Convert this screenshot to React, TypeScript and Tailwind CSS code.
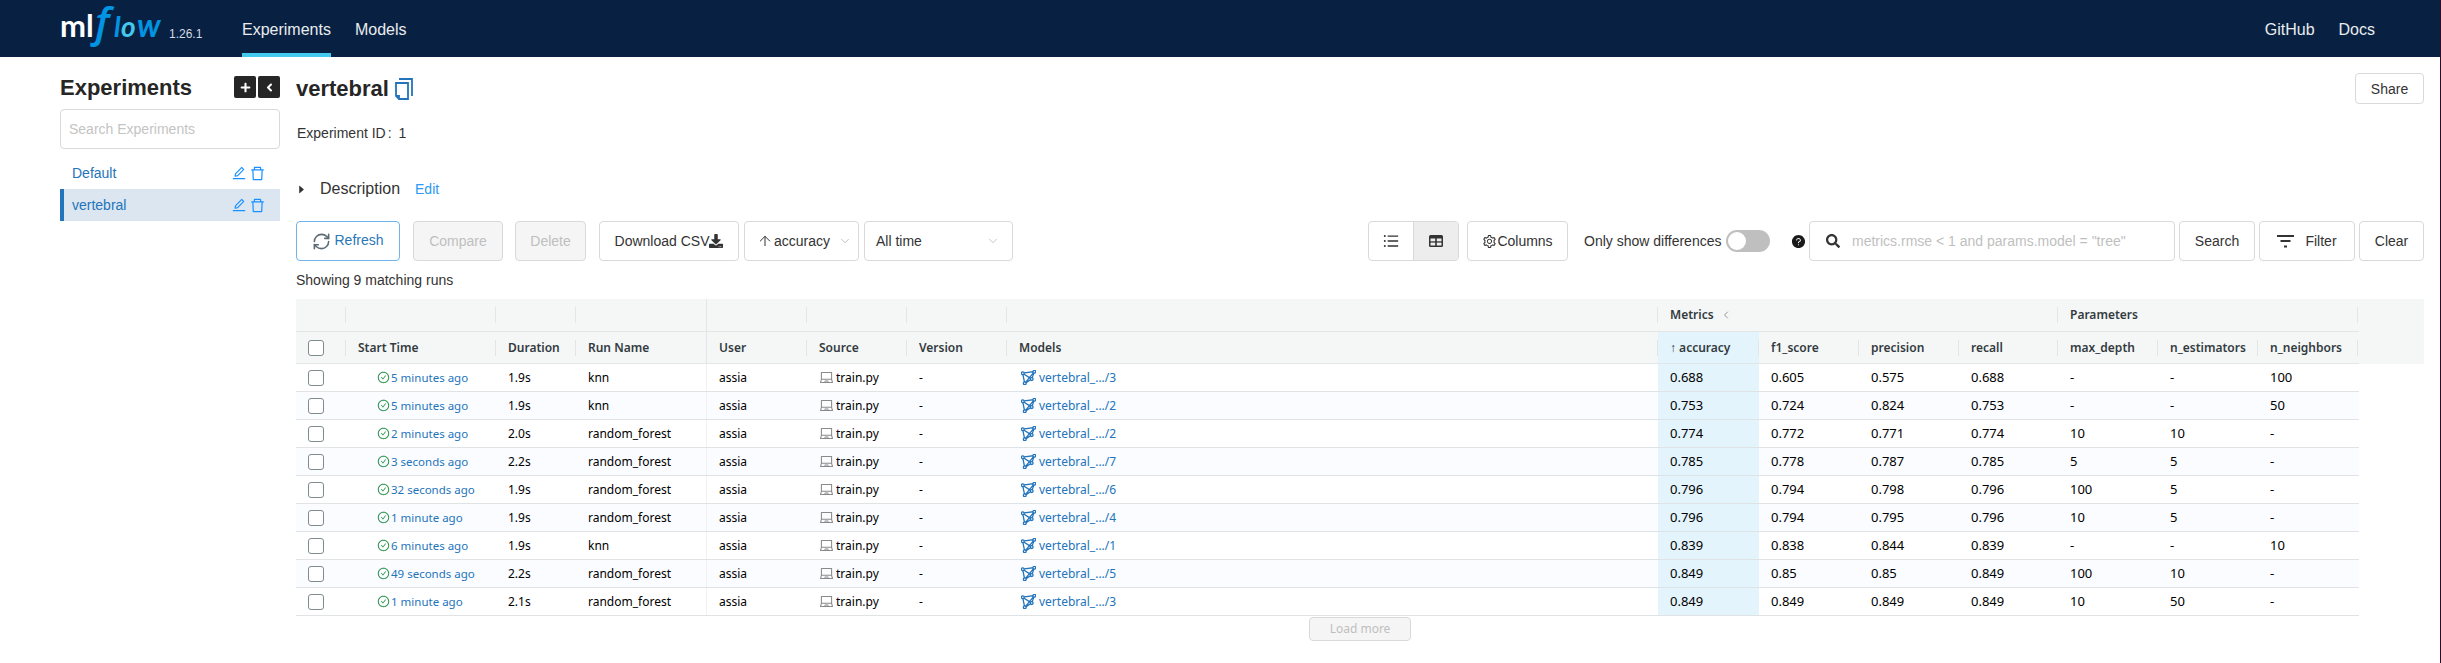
import { AiFillCaretRight, AiFillQuestionCircle, AiOutlineBars, AiOutlineCheckCircle, AiOutlineDelete, AiOutlineEdit, AiOutlineLaptop, AiOutlineSetting } from "react-icons/ai"
import { FaAngleLeft, FaDownload, FaPlus, FaSearch } from "react-icons/fa"
import { ArrowUp, ChevronDown, ChevronLeft, RefreshCw } from "lucide-react"
import type { ReactNode } from "react"

const runs = [
    ["5 minutes ago", "1.9s", "knn", "vertebral_.../3", "0.688", "0.605", "0.575", "0.688", "-", "-", "100"],
    ["5 minutes ago", "1.9s", "knn", "vertebral_.../2", "0.753", "0.724", "0.824", "0.753", "-", "-", "50"],
    ["2 minutes ago", "2.0s", "random_forest", "vertebral_.../2", "0.774", "0.772", "0.771", "0.774", "10", "10", "-"],
    ["3 seconds ago", "2.2s", "random_forest", "vertebral_.../7", "0.785", "0.778", "0.787", "0.785", "5", "5", "-"],
    ["32 seconds ago", "1.9s", "random_forest", "vertebral_.../6", "0.796", "0.794", "0.798", "0.796", "100", "5", "-"],
    ["1 minute ago", "1.9s", "random_forest", "vertebral_.../4", "0.796", "0.794", "0.795", "0.796", "10", "5", "-"],
    ["6 minutes ago", "1.9s", "knn", "vertebral_.../1", "0.839", "0.838", "0.844", "0.839", "-", "-", "10"],
    ["49 seconds ago", "2.2s", "random_forest", "vertebral_.../5", "0.849", "0.85", "0.85", "0.849", "100", "10", "-"],
    ["1 minute ago", "2.1s", "random_forest", "vertebral_.../3", "0.849", "0.849", "0.849", "0.849", "10", "50", "-"],
]

function Logo() {
    return (
        <svg width="108" height="57" viewBox="0 0 108 57" className="shrink-0">
            <text x="1" y="37" fontFamily="Lato, sans-serif" fontWeight="700" fontSize="31" fill="#ffffff">ml</text>
            <text x="36" y="37" fontFamily="'Open Sans', sans-serif" fontStyle="italic" fontWeight="600" fontSize="42" fill="#0194e2">f</text>
            <text x="55" y="37" fontFamily="Lato, sans-serif" fontStyle="italic" fontWeight="700" fontSize="28" fill="#0194e2">l</text>
            <text x="62" y="37" fontFamily="Lato, sans-serif" fontStyle="italic" fontWeight="700" fontSize="28" fill="#43c9ed">o</text>
            <text x="78" y="37" fontFamily="Lato, sans-serif" fontStyle="italic" fontWeight="700" fontSize="32" fill="#0194e2">w</text>
        </svg>
    )
}

function CopyIcon() {
    return (
        <svg width="18" height="22" viewBox="0 0 18 22" fill="none" stroke="#2374bb" strokeWidth="1.8" className="ml-[6px] shrink-0">
            <path d="M4 1h13v17" />
            <path d="M1 5h12v16H4l-3-3z" />
            <path d="M1 18h3v3" />
        </svg>
    )
}

function ModelIcon() {
    return (
        <svg width="15" height="15" viewBox="0 0 14 14" fill="none" stroke="#2374bb" strokeWidth="1.2" className="shrink-0">
            <path d="M1.5 3 12.5 1.5 10 8.5 3.5 12.5ZM1.5 3 10 8.5M12.5 1.5 3.5 12.5" />
            <circle cx="1.7" cy="3" r="1.3" fill="#ffffff" />
            <circle cx="12.4" cy="1.7" r="1.3" fill="#ffffff" />
            <circle cx="10" cy="8.5" r="1.3" fill="#ffffff" />
            <circle cx="3.5" cy="12.4" r="1.3" fill="#ffffff" />
        </svg>
    )
}

function GridIcon() {
    return (
        <svg width="14" height="12" viewBox="0 0 14 12" className="shrink-0">
            <rect width="14" height="12" rx="1.5" fill="#333333" />
            <rect x="1.5" y="3.5" width="4.7" height="2.8" fill="#ededed" />
            <rect x="7.8" y="3.5" width="4.7" height="2.8" fill="#ededed" />
            <rect x="1.5" y="7.6" width="4.7" height="2.9" fill="#ededed" />
            <rect x="7.8" y="7.6" width="4.7" height="2.9" fill="#ededed" />
        </svg>
    )
}

function FilterIcon() {
    return (
        <svg width="17" height="13" viewBox="0 0 17 13" fill="#333333" className="shrink-0">
            <rect width="17" height="2" />
            <rect x="3.5" y="5" width="10" height="2" />
            <rect x="7" y="10.5" width="3" height="2" />
        </svg>
    )
}

function Btn({ className, children }: { className: string, children: ReactNode }) {
    return (
        <div className={`h-10 shrink-0 flex items-center justify-center rounded-[4px] border text-sm ${className}`}>
            {children}
        </div>
    )
}

function Sep() {
    return <div className="h-4 w-px bg-[#e3e6e6] shrink-0"></div>
}

function HeaderCell({ w, label, sorted }: { w: string, label?: ReactNode, sorted?: boolean }) {
    return (
        <div className={`h-full shrink-0 flex items-center justify-between pl-3 ${w} ${sorted ? "bg-[#e4f4fc]" : ""}`}>
            <span className="whitespace-nowrap">{label}</span>
            <Sep />
        </div>
    )
}

function Cell({ w, children, sorted }: { w: string, children: ReactNode, sorted?: boolean }) {
    return (
        <div className={`h-full shrink-0 flex items-center pl-3 whitespace-nowrap ${w} ${sorted ? "bg-[#e4f4fc]" : ""}`}>
            {children}
        </div>
    )
}

function Metric({ w, children, sorted }: { w: string, children: ReactNode, sorted?: boolean }) {
    return <Cell w={`${w} text-[13px]`} sorted={sorted}>{children}</Cell>
}

function Checkbox() {
    return <div className="w-4 h-4 rounded-[3px] border border-[#7f8c8d] bg-white"></div>
}

function ExperimentRow({ name, active }: { name: string, active?: boolean }) {
    return (
        <div className={`h-8 flex items-center text-sm text-[#2374bb] ${active ? "bg-[#dce6f1] border-l-4 border-[#2374bb] pl-2" : "pl-3"}`}>
            <span className="flex-1">{name}</span>
            <AiOutlineEdit size={16} className="text-[#1890ff]" />
            <AiOutlineDelete size={17} className="ml-[2px] mr-[14px] text-[#1890ff]" />
        </div>
    )
}

export default function App() {
    return (
        <div className="min-h-screen bg-white border-r border-[#300a24] font-['Liberation_Sans',Arial,sans-serif] text-[#333333]">
            {/* header */}
            <div className="h-[57px] bg-[#082142] flex items-center pl-[59px] pr-[65px] text-base text-[#e9ecef]">
                <Logo />
                <span className="ml-[2px] mt-[11px] w-[73px] text-xs text-[#d5dbe2]">1.26.1</span>
                <div className="h-full flex items-center border-b-4 border-[#43c9ed] pt-[6px]">Experiments</div>
                <div className="ml-6 pt-[2px]">Models</div>
                <div className="ml-auto pt-[2px]">GitHub</div>
                <div className="ml-6 pt-[2px]">Docs</div>
            </div>

            <div className="flex pl-[60px] pr-[16px]">
                {/* experiment list */}
                <div className="w-[220px] shrink-0 pt-[19px]">
                    <div className="h-[22px] flex items-center justify-between">
                        <div className="text-[22px] font-bold text-[#262626]">Experiments</div>
                        <div className="flex gap-0.5">
                            <div className="w-[22px] h-[22px] rounded-[2px] bg-[#262626] text-white flex items-center justify-center"><FaPlus size={11} /></div>
                            <div className="w-[22px] h-[22px] rounded-[2px] bg-[#262626] text-white flex items-center justify-center"><FaAngleLeft size={13} /></div>
                        </div>
                    </div>
                    <input placeholder="Search Experiments" className="mt-[11px] w-full h-10 px-2 rounded-[4px] border border-[#d9d9d9] text-sm placeholder:text-[#c4c4c4]" />
                    <div className="mt-2">
                        <ExperimentRow name="Default" />
                        <ExperimentRow name="vertebral" active />
                    </div>
                </div>

                {/* experiment page */}
                <div className="flex-1 min-w-0 ml-4 pt-4">
                    <div className="h-[31px] flex items-center">
                        <div className="text-[22px] font-bold text-[#262626]">vertebral</div>
                        <CopyIcon />
                        <Btn className="ml-auto !h-[31px] w-[69px] border-[#d9d9d9]">Share</Btn>
                    </div>
                    <div className="mt-[18px] h-[22px] pl-px flex items-center text-sm">Experiment ID<span className="ml-[2px] mr-[7px]">:</span> 1</div>
                    <div className="mt-[33px] h-6 flex items-center">
                        <AiFillCaretRight size={11} className="text-[#333333]" />
                        <span className="ml-[13px] text-base">Description</span>
                        <span className="ml-[15px] text-sm text-[#2e9af5]">Edit</span>
                    </div>

                    {/* toolbar */}
                    <div className="mt-[20px] flex items-center">
                        <Btn className="w-[104px] border-[#6eb3ec] text-[#2b78b8]">
                            <RefreshCw size={19} className="text-[#5c6b75] mr-[3px]" />
                            <span className="-mt-[2px]">Refresh</span>
                        </Btn>
                        <Btn className="ml-[13px] w-[90px] border-[#d9d9d9] bg-[#f5f5f5] text-[#bfbfbf]">Compare</Btn>
                        <Btn className="ml-3 w-[71px] border-[#d9d9d9] bg-[#f5f5f5] text-[#bfbfbf]">Delete</Btn>
                        <Btn className="ml-[13px] w-[140px] border-[#d9d9d9]">
                            Download CSV
                            <FaDownload size={14} />
                        </Btn>
                        <Btn className="ml-[5px] w-[115px] border-[#d9d9d9] !justify-start pl-3">
                            <ArrowUp size={16} strokeWidth={1.5} />
                            <span className="ml-[1px]">accuracy</span>
                            <ChevronDown size={14} strokeWidth={1} className="ml-[8px] text-[#999999]" />
                        </Btn>
                        <Btn className="ml-[5px] w-[149px] border-[#d9d9d9] !justify-between pl-[11px] pr-3">
                            All time
                            <ChevronDown size={14} strokeWidth={1} className="text-[#999999]" />
                        </Btn>

                        <div className="ml-auto h-10 w-[91px] flex rounded-[4px] border border-[#d9d9d9] overflow-hidden">
                            <div className="flex-1 flex items-center justify-center"><AiOutlineBars size={18} /></div>
                            <div className="flex-1 flex items-center justify-center bg-[#ededed] border-l border-[#d9d9d9]"><GridIcon /></div>
                        </div>
                        <Btn className="ml-2 w-[101px] border-[#d9d9d9]">
                            <AiOutlineSetting size={15} />
                            Columns
                        </Btn>
                        <span className="ml-4 w-[137px] shrink-0 text-sm whitespace-nowrap">Only show differences</span>
                        <div className="ml-[5px] w-11 h-[22px] rounded-full bg-[#bfbfbf] shrink-0 flex items-center pl-[2px]">
                            <div className="w-[18px] h-[18px] rounded-full bg-white"></div>
                        </div>
                        <AiFillQuestionCircle size={15} className="ml-[21px] shrink-0 text-[#1a1a1a]" />
                        <div className="ml-[3px] w-[366px] h-10 shrink-0 flex items-center pl-4 rounded-[4px] border border-[#d9d9d9]">
                            <FaSearch size={14} />
                            <input placeholder={'metrics.rmse < 1 and params.model = "tree"'} className="ml-[12px] flex-1 text-sm placeholder:text-[#bfbfbf]" />
                        </div>
                        <Btn className="ml-1 w-[76px] border-[#d9d9d9]">Search</Btn>
                        <Btn className="ml-1 w-[96px] border-[#d9d9d9] gap-[11px]"><FilterIcon />Filter</Btn>
                        <Btn className="ml-1 w-[65px] border-[#d9d9d9]">Clear</Btn>
                    </div>

                    <div className="mt-[9px] h-5 flex items-center text-sm">Showing 9 matching runs</div>

                    {/* runs table */}
                    <div className="mt-[9px] font-['Noto_Sans',sans-serif] text-xs text-black">
                        <div className="bg-[#f5f7f7] font-semibold text-[#333b40]">
                            <div className="w-[2063px] h-[33px] flex border-b border-[#e3e6e6]">
                                <HeaderCell w="w-[50px]" />
                                <HeaderCell w="w-[150px]" />
                                <HeaderCell w="w-[80px]" />
                                <div className="w-[131px] shrink-0 border-r border-[#e3e6e6]"></div>
                                <HeaderCell w="w-[100px]" />
                                <HeaderCell w="w-[100px]" />
                                <HeaderCell w="w-[100px]" />
                                <HeaderCell w="w-[651px]" />
                                <HeaderCell w="w-[400px]" label={<span className="flex items-center gap-[6px]">Metrics <ChevronLeft size={12} strokeWidth={1} /></span>} />
                                <HeaderCell w="w-[300px]" label="Parameters" />
                            </div>
                            <div className="w-[2063px] h-8 flex border-b border-[#e3e6e6]">
                                <div className="w-[50px] h-full shrink-0 flex items-center justify-between pl-3">
                                    <Checkbox />
                                    <Sep />
                                </div>
                                <HeaderCell w="w-[150px]" label="Start Time" />
                                <HeaderCell w="w-[80px]" label="Duration" />
                                <div className="w-[131px] h-full shrink-0 flex items-center pl-3 border-r border-[#e3e6e6]">Run Name</div>
                                <HeaderCell w="w-[100px]" label="User" />
                                <HeaderCell w="w-[100px]" label="Source" />
                                <HeaderCell w="w-[100px]" label="Version" />
                                <HeaderCell w="w-[651px]" label="Models" />
                                <HeaderCell w="w-[101px]" sorted label="↑ accuracy" />
                                <HeaderCell w="w-[100px]" label="f1_score" />
                                <HeaderCell w="w-[100px]" label="precision" />
                                <HeaderCell w="w-[99px]" label="recall" />
                                <HeaderCell w="w-[100px]" label="max_depth" />
                                <HeaderCell w="w-[100px]" label="n_estimators" />
                                <HeaderCell w="w-[100px]" label="n_neighbors" />
                            </div>
                        </div>
                        {runs.map((run, i) => (
                            <div key={i} className={`w-[2063px] h-7 flex border-b border-[#dfe3e3] ${i % 2 === 1 ? "bg-[#fafcff]" : "bg-white"}`}>
                                <Cell w="w-[50px]"><Checkbox /></Cell>
                                <div className="w-[150px] h-full shrink-0 flex items-center pl-[31px] whitespace-nowrap text-[11.5px] text-[#2374bb]">
                                    <AiOutlineCheckCircle size={13} className="text-[#1e8f45] mr-[1px] shrink-0" />
                                    {run[0]}
                                </div>
                                <Cell w="w-[80px]">{run[1]}</Cell>
                                <div className="w-[131px] h-full shrink-0 flex items-center pl-3 border-r border-[#f0f2f2]">{run[2]}</div>
                                <Cell w="w-[100px]">assia</Cell>
                                <Cell w="w-[100px]"><AiOutlineLaptop size={15} className="text-[#8a8a8a] mr-[2px]" />train.py</Cell>
                                <Cell w="w-[100px]">-</Cell>
                                <div className="w-[651px] h-full shrink-0 flex items-center pl-[14px] gap-[3px] text-[#2374bb]">
                                    <ModelIcon />
                                    {run[3]}
                                </div>
                                <Metric w="w-[101px]" sorted>{run[4]}</Metric>
                                <Metric w="w-[100px]">{run[5]}</Metric>
                                <Metric w="w-[100px]">{run[6]}</Metric>
                                <Metric w="w-[99px]">{run[7]}</Metric>
                                <Metric w="w-[100px]">{run[8]}</Metric>
                                <Metric w="w-[100px]">{run[9]}</Metric>
                                <Metric w="w-[100px]">{run[10]}</Metric>
                            </div>
                        ))}
                        <div className="mt-[1px] flex justify-center">
                            <div className="w-[102px] h-6 flex items-center justify-center rounded-[4px] border border-[#d9d9d9] bg-[#f5f5f5] text-[#bfbfbf]">Load more</div>
                        </div>
                    </div>
                </div>
            </div>
        </div>
    )
}
